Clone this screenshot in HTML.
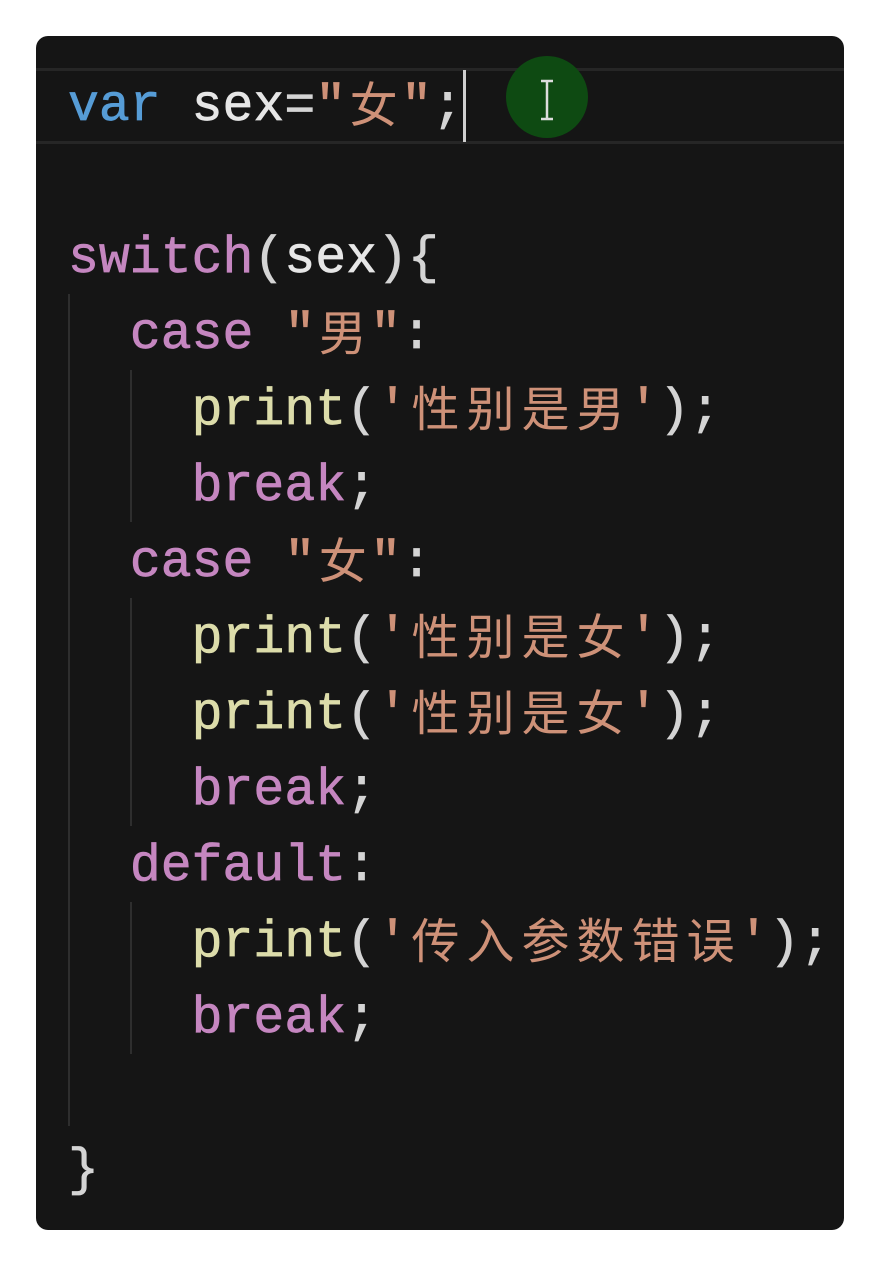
<!DOCTYPE html>
<html><head><meta charset="utf-8"><style>
html,body{margin:0;padding:0;background:#fff;width:880px;height:1266px;overflow:hidden}
.box{position:absolute;left:36px;top:36px;width:808px;height:1194px;background:#151515;border-radius:12px;overflow:hidden}
.hl{position:absolute;left:0;right:0;top:32px;height:70px;border-top:3px solid #262626;border-bottom:3px solid #262626}
.l{position:absolute;left:32px;height:76px;line-height:76px;font-family:"Liberation Mono","Noto Sans CJK SC",monospace;font-size:51.5px;color:#d4d4d4;white-space:pre;-webkit-text-stroke:0.7px currentColor}
.c{display:inline-block;vertical-align:top;position:relative;top:-6px;height:76px;line-height:76px;width:55px;text-align:center;font-family:"Noto Sans CJK SC",sans-serif;font-size:48px;-webkit-text-stroke:0}
.k{color:#c586c0}.v{color:#569cd6}.s{color:#ce9178}.f{color:#dcdcaa}.w{color:#e6e6e6}
.g{position:absolute;width:2px;background:#2e2e2e}
</style></head><body>
<div class="box">
<div class="hl"></div>
<div style="position:absolute;left:427px;top:34px;width:3px;height:72px;background:#cfcfcf"></div>
<div style="position:absolute;left:470px;top:20px;width:82px;height:82px;border-radius:50%;background:#0e4a12"></div>
<svg style="position:absolute;left:500px;top:42px" width="22" height="44" viewBox="0 0 22 44"><path d="M5 3h12M11 3v38M5 41h12" stroke="#ddd" stroke-width="2.5" fill="none"/></svg>
<div class="g" style="left:32px;top:258px;height:832px"></div>
<div class="g" style="left:94px;top:334px;height:152px"></div>
<div class="g" style="left:94px;top:562px;height:228px"></div>
<div class="g" style="left:94px;top:866px;height:152px"></div>
<div class="l" style="top:33px"><span class="v">var</span> <span class="w">sex</span>=<span class="s">"<span class="c">女</span>"</span>;</div>
<div class="l" style="top:185px"><span class="k">switch</span>(<span class="w">sex</span>){</div>
<div class="l" style="top:261px">  <span class="k">case</span> <span class="s">"<span class="c">男</span>"</span>:</div>
<div class="l" style="top:337px">    <span class="f">print</span>(<span class="s">'<span class="c">性</span><span class="c">别</span><span class="c">是</span><span class="c">男</span>'</span>);</div>
<div class="l" style="top:413px">    <span class="k">break</span>;</div>
<div class="l" style="top:489px">  <span class="k">case</span> <span class="s">"<span class="c">女</span>"</span>:</div>
<div class="l" style="top:565px">    <span class="f">print</span>(<span class="s">'<span class="c">性</span><span class="c">别</span><span class="c">是</span><span class="c">女</span>'</span>);</div>
<div class="l" style="top:641px">    <span class="f">print</span>(<span class="s">'<span class="c">性</span><span class="c">别</span><span class="c">是</span><span class="c">女</span>'</span>);</div>
<div class="l" style="top:717px">    <span class="k">break</span>;</div>
<div class="l" style="top:793px">  <span class="k">default</span>:</div>
<div class="l" style="top:869px">    <span class="f">print</span>(<span class="s">'<span class="c">传</span><span class="c">入</span><span class="c">参</span><span class="c">数</span><span class="c">错</span><span class="c">误</span>'</span>);</div>
<div class="l" style="top:945px">    <span class="k">break</span>;</div>
<div class="l" style="top:1097px">}</div>
</div>
</body></html>
